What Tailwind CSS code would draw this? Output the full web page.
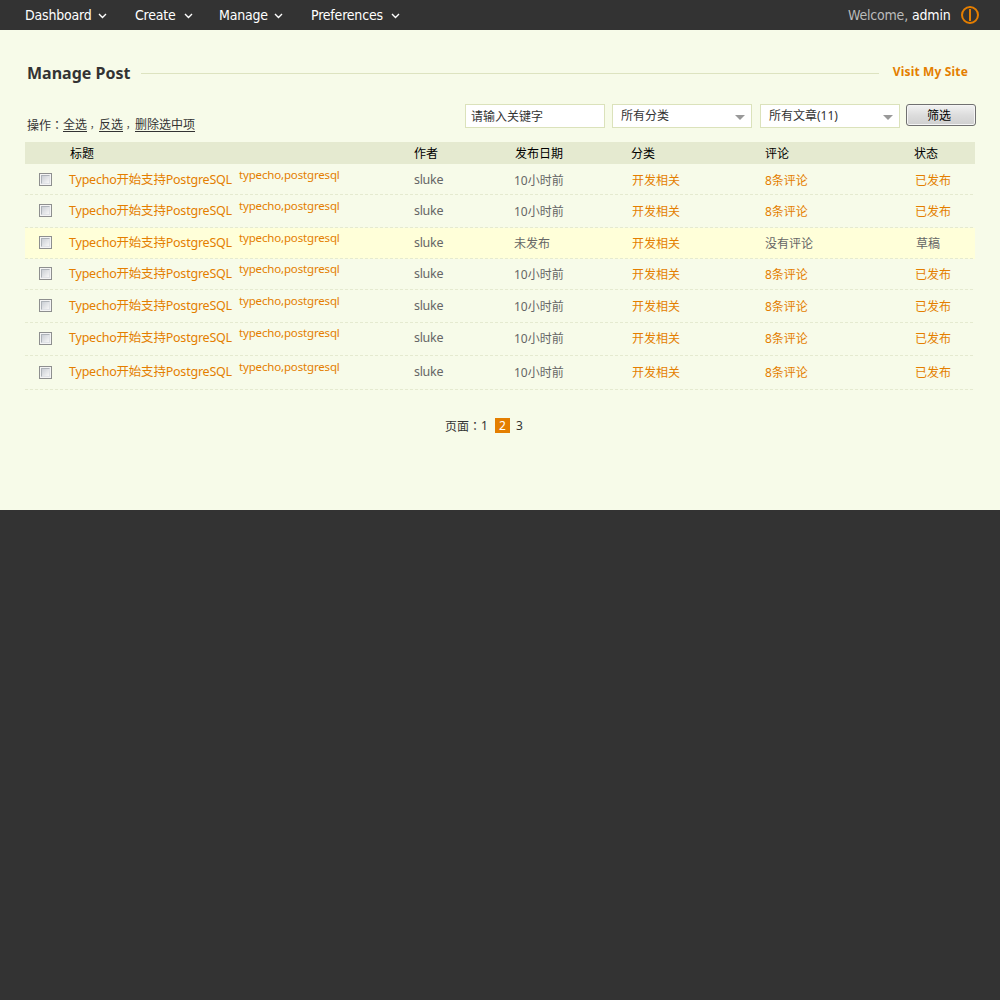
<!DOCTYPE html>
<html lang="zh-CN">
<head>
<meta charset="utf-8">
<title>Manage Post</title>
<script src="https://cdn.jsdelivr.net/npm/@tailwindcss/browser@4"></script>
</head>
<body class="min-h-screen bg-[#333333] font-['Noto_Sans','Noto_Sans_CJK_SC',sans-serif] text-xs text-[#333333]">
<header class="flex h-[30px] items-center bg-[#333333] pl-[25px] pr-5 font-['DejaVu_Sans_Condensed','DejaVu_Sans',sans-serif] text-sm font-normal text-white [font-stretch:condensed]">
  <nav class="flex flex-1 whitespace-nowrap tracking-[-0.2px]">
    <a class="flex w-[110px] items-center"><span class="w-[73px]">Dashboard</span><svg class="mt-px h-[6px] w-[9px]" viewBox="0 0 9 6" fill="none" stroke="#fff" stroke-width="1.4"><path d="M1 1l3.5 3.5L8 1"/></svg></a>
    <a class="flex w-[84px] items-center"><span class="w-[49px]">Create</span><svg class="mt-px h-[6px] w-[9px]" viewBox="0 0 9 6" fill="none" stroke="#fff" stroke-width="1.4"><path d="M1 1l3.5 3.5L8 1"/></svg></a>
    <a class="flex w-[92px] items-center"><span class="w-[55px]">Manage</span><svg class="mt-px h-[6px] w-[9px]" viewBox="0 0 9 6" fill="none" stroke="#fff" stroke-width="1.4"><path d="M1 1l3.5 3.5L8 1"/></svg></a>
    <a class="flex items-center"><span class="w-[80px]">Preferences</span><svg class="mt-px h-[6px] w-[9px]" viewBox="0 0 9 6" fill="none" stroke="#fff" stroke-width="1.4"><path d="M1 1l3.5 3.5L8 1"/></svg></a>
  </nav>
  <span class="w-[64px] whitespace-nowrap tracking-[-0.2px] text-[#bbbbbb]">Welcome,</span>
  <span class="w-[47px] whitespace-nowrap tracking-[-0.2px]">admin</span>
  <svg class="ml-px h-[20px] w-[20px]" viewBox="0 0 20 20" fill="none" stroke="#e47e00" stroke-width="2"><circle cx="10" cy="10" r="8"/><path d="M10 4v12"/></svg>
</header>

<main class="h-[480px] bg-[#f7fbe9] px-[25px] pt-8">
  <div class="flex h-[22px] items-center pl-0.5 pr-[7px]">
    <h1 class="w-[114px] whitespace-nowrap text-base leading-[22px] font-bold">Manage Post</h1>
    <div class="h-px w-[738px] bg-[#dde3c0]"></div>
    <a class="-mt-[3px] ml-[14px] whitespace-nowrap text-xs font-bold tracking-[0.15px] text-[#e47e00]">Visit My Site</a>
  </div>

  <div class="-mr-px mt-5 flex h-6">
    <div class="flex w-[440px] shrink-0 pl-0.5 pt-[13px] leading-4 whitespace-nowrap">
      <span class="w-9">操作<span lang="zh-TW" class="font-['Noto_Sans_CJK_TC',sans-serif]">：</span></span><a class="w-6 underline underline-offset-2">全选</a><span class="w-3 pl-[3px] text-[9px]">，</span><a class="w-6 underline underline-offset-2">反选</a><span class="w-3 pl-[3px] text-[9px]">，</span><a class="underline underline-offset-2">删除选中项</a>
    </div>
    <div class="flex h-6 w-[140px] items-center border border-[#dbe2bb] bg-white pl-[5px] pt-0.5">请输入关键字</div>
    <div class="ml-[7px] flex h-6 w-[140px] items-center justify-between border border-[#dbe2bb] bg-white pl-2 pr-[6px]">所有分类<svg class="mt-[3px] h-[5px] w-[10px]" viewBox="0 0 10 5" fill="#999"><path d="M0 0h10L5 5z"/></svg></div>
    <div class="ml-2 flex h-6 w-[140px] items-center justify-between border border-[#dbe2bb] bg-white pl-2 pr-[6px]">所有文章(11)<svg class="mt-[3px] h-[5px] w-[10px]" viewBox="0 0 10 5" fill="#999"><path d="M0 0h10L5 5z"/></svg></div>
    <button class="ml-[6px] flex h-[22px] w-[70px] items-center justify-center rounded-[3px] border border-[#707070] bg-linear-to-b from-[#f2f2f2] via-[#dddddd] to-[#cfcfcf] pt-px pr-1 text-black inset-ring inset-ring-[#f5f5f5]">筛选</button>
  </div>

  <div class="mt-[14px] grid h-[22px] grid-cols-[45px_344px_101px_116px_134px_149px_1fr] items-center bg-[#e5ead0] pt-0.5 text-black">
    <span></span><span>标题</span><span>作者</span><span>发布日期</span><span>分类</span><span>评论</span><span>状态</span>
  </div>
  <div id="rows"></div>

  <div class="mt-[27px] flex h-[17px] items-center pl-[420px] leading-[15px]">
    <span class="w-9 whitespace-nowrap">页面<span lang="zh-TW" class="font-['Noto_Sans_CJK_TC',sans-serif]">：</span></span><span class="w-[14px]">1</span><span class="h-[15px] w-[15px] bg-[#e47e00] text-center text-white">2</span><span class="ml-[6px]">3</span>
  </div>
</main>

<script>
const rows = [
  { height: 31, text: 16, box: 9 },
  { height: 33, text: 16, box: 9 },
  { height: 31, text: 15, box: 8, draft: true },
  { height: 31, text: 15, box: 8 },
  { height: 33, text: 16, box: 9 },
  { height: 33, text: 15, box: 9 },
  { height: 34, text: 16, box: 10 },
];
document.getElementById('rows').innerHTML = rows.map(r => {
  const link = 'text-[#e47e00]';
  return `<div class="flex flex-col ${r.draft ? 'bg-[#ffffd9]' : ''}" style="height:${r.height}px">
    <div class="grid min-h-0 flex-1 grid-cols-[44px_170px_175px_100px_117px_134px_150px_1fr] items-start leading-4 whitespace-nowrap text-[#666666]">
      <span class="ml-[14px] h-[13px] w-[13px] border border-[#8e8f8f] bg-[#f4f4f4] p-px" style="margin-top:${r.box}px"><span class="block h-[9px] w-[9px] border border-t-[#aeb3b9] border-l-[#aeb3b9] border-r-[#e0e2e6] border-b-[#e0e2e6] bg-linear-to-br from-[#cbcfd5] to-[#f6f6f6]"></span></span>
      <a class="text-[12.5px] tracking-[-0.22px] ${link}" style="margin-top:${r.text - 8}px">Typecho开始支持PostgreSQL</a>
      <a class="text-[11.5px] tracking-[-0.16px] ${link}" style="margin-top:${r.text - 13}px">typecho,postgresql</a>
      <span class="text-[12.5px] tracking-[-0.3px]" style="margin-top:${r.text - 8}px">sluke</span>
      <span style="margin-top:${r.text - 7}px">${r.draft ? '未发布' : '10小时前'}</span>
      <a class="pl-px ${link}" style="margin-top:${r.text - 7}px">开发相关</a>
      <span class="${r.draft ? '' : link}" style="margin-top:${r.text - 7}px">${r.draft ? '没有评论' : '8条评论'}</span>
      <span class="${r.draft ? 'pl-px' : link}" style="margin-top:${r.text - 7}px">${r.draft ? '草稿' : '已发布'}</span>
    </div>
    <div class="h-px bg-[repeating-linear-gradient(90deg,#e5ead0_0_3px,transparent_3px_5px)]"></div>
  </div>`;
}).join('');
</script>
</body>
</html>
